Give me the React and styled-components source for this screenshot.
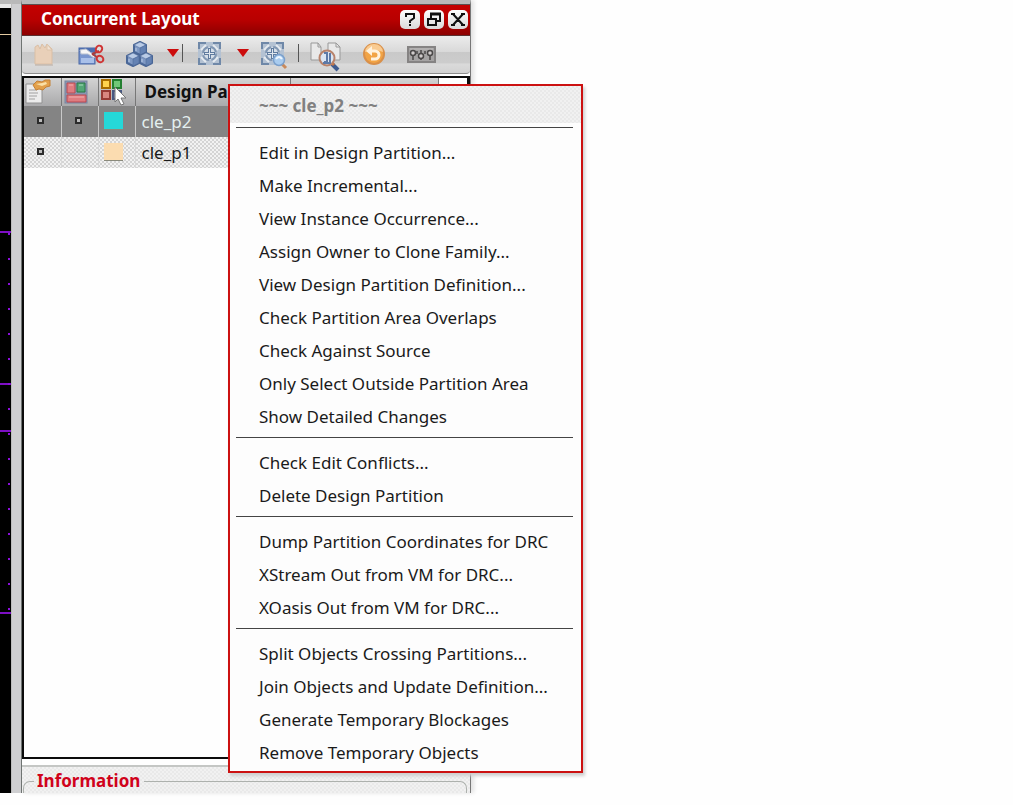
import React from "react";
import styled, { createGlobalStyle, css } from "styled-components";

const GlobalStyle = createGlobalStyle`
  *, *::before, *::after { box-sizing: border-box; }
  body {
    margin: 0;
    background: #fefefe;
    color: #1a1a1a;
    font-family: "Noto Sans", "Open Sans", sans-serif;
    font-size: 17px;
    line-height: 24px;
  }
  button { font: inherit; color: inherit; border: 0; padding: 0; background: none; cursor: pointer; }
`;

const dither = css`
  background-color: #f1f1f1;
  background-image: conic-gradient(#e9e9e9 25%, transparent 0 50%, #e9e9e9 0 75%, transparent 0);
  background-size: 4px 4px;
`;

const Workspace = styled.main`
  position: relative;
  display: grid;
  grid-template-columns: 11px 10px minmax(300px, 450fr) 542fr;
  min-height: 100vh;
  padding-bottom: 12px;
`;

const CanvasEdge = styled.div`
  border-top: 4px solid #b9b9b9;
  background: #e8e8e8;
  padding-top: 4px;
  overflow: hidden;
`;

const CanvasDrawing = styled.svg`
  display: block;
  width: 100%;
  height: 100%;
  background: #000;
`;

const Gutter = styled.div`
  background: #cfcfd1;
  border-top: 4px solid #b9b9b9;
  border-left: 1px solid #bdbdbd;
`;

const Panel = styled.section`
  display: flex;
  flex-direction: column;
  border-top: 4px solid #b9b9b9;
  border-right: 1px solid #777;
  border-left: 1px solid #6f7472;
  box-shadow: 3px 0 4px #e2e2e2;
`;

const TitleBar = styled.header`
  display: flex;
  align-items: center;
  justify-content: space-between;
  height: 32px;
  padding: 0 2px 2px 19px;
  border-top: 1px solid #5a5050;
  border-bottom: 1px solid #5b3030;
  background: linear-gradient(#c40000, #b80000 50%, #8c0000);
`;

const PanelTitle = styled.h1`
  margin: 0;
  color: #fff;
  font-size: 17px;
  line-height: 24px;
  font-weight: 700;
`;

const WindowButtons = styled.div`
  display: flex;
  gap: 4px;
`;

const WindowButton = styled.button`
  display: flex;
  width: 20px;
  height: 19px;
  border-radius: 5px;
  background: linear-gradient(#fff, #d9d9d9);
`;

const Toolbar = styled.div`
  display: flex;
  align-items: center;
  height: 38px;
  padding: 0 7px 4px;
  border-bottom: 1px solid #8d8d8d;
  border-radius: 0 0 4px 4px;
  background: linear-gradient(#ececec, #d9d9d9 42%, #c9c9c9 43%, #cccccc 72%, #dadada 76%, #d2d2d2);
`;

const ToolGroup = styled.div`
  display: flex;
  gap: 20px;
  margin-left: ${(p) => p.$before || 0}px;
`;

const ToolButton = styled.button`
  display: flex;
  width: 28px;
  height: 30px;
  svg { overflow: visible; }
`;

const CaretButton = styled.button`
  display: flex;
  width: 14px;
  height: 8px;
  margin-left: 13px;
`;

const ToolDivider = styled.span`
  width: 1px;
  height: 18px;
  margin-left: ${(p) => p.$before}px;
  background: #555;
`;

const ListBox = styled.div`
  flex: 1;
  margin-top: 2px;
  border: 2px solid #0c0c0c;
  border-right-width: 3px;
  background: #fefefe;
`;

const PartitionTable = styled.table`
  width: 100%;
  border-collapse: collapse;
  table-layout: fixed;
`;

const HeadCell = styled.th`
  width: ${(p) => p.$width || "auto"};
  height: 28px;
  padding: 0 0 0 ${(p) => (p.$text ? 9 : 0)}px;
  border-right: 1px solid #777;
  background: linear-gradient(#d3d3d3, #a9a9ab);
  color: #111;
  font-size: 17px;
  line-height: 26px;
  font-weight: 700;
  text-align: left;
  svg { display: block; }
`;

const HeadSpace = styled.th`
  width: 29px;
  padding: 0;
`;

const Row = styled.tr`
  ${(p) => (p.$selected ? css`background: #848484; color: #e4f0f0;` : css`
    background-color: #f2f2f2;
    background-image: conic-gradient(#d4d4d4 25%, transparent 0 50%, #d4d4d4 0 75%, transparent 0);
    background-size: 4px 4px;
  `)}
`;

const Cell = styled.td`
  height: 31px;
  padding: 0 0 0 ${(p) => (p.$text ? 6 : 0)}px;
  border-right: ${(p) => (p.$text ? 0 : 1)}px solid ${(p) => (p.$selected ? "#c9c9c9" : "#d9d9d9")};
  line-height: 28px;
`;

const Marker = styled.span`
  display: block;
  width: 7px;
  height: 7px;
  margin: 0 auto 2px 13px;
  border: 2px solid #2b2b2b;
  background: #bbb;
`;

const Swatch = styled.span`
  display: block;
  width: 19px;
  height: 18px;
  margin: 0 0 2px 5px;
  border-bottom: 1px solid #8a8a7c;
  background: ${(p) => p.$color};
`;

const InfoArea = styled.div`
  margin-top: 6px;
  padding: 2px 3px 0 1px;
  border-top: 2px solid #c4c6c4;
  ${dither}
`;

const InfoGroup = styled.fieldset`
  min-width: 0;
  height: 24px;
  margin: 0;
  padding: 0 10px;
  border: 1px solid #adb1ad;
  border-bottom: 0;
  border-radius: 7px 7px 0 0;
`;

const InfoLegend = styled.legend`
  padding: 0 4px 0 3px;
  color: #d0021b;
  font-size: 17px;
  line-height: 24px;
  font-weight: 700;
`;

const ContextMenu = styled.div`
  position: absolute;
  top: 84px;
  left: 228px;
  display: flex;
  flex-direction: column;
  width: max-content;
  padding-bottom: 2px;
  border: 2px solid #cc1111;
  background: #fdfdfd;
  box-shadow: 2px 3px 3px #cfcfcf;
`;

const MenuTitle = styled.div`
  height: 37px;
  padding: 0 33px 0 29px;
  ${dither}
  color: #808080;
  font-size: 17px;
  line-height: 40px;
  font-weight: 700;
`;

const MenuItem = styled.button`
  height: 33px;
  padding: 0 33px 0 29px;
  text-align: left;
  white-space: nowrap;
  line-height: 33px;
  &:hover { background: #efefef; }
`;

const MenuRule = styled.hr`
  width: auto;
  height: 1px;
  margin: 4px 8px 8px 6px;
  border: 0;
  background: #444;
`;

const LINES = [231, 383, 430, 612];
const DOTS = Array.from({ length: 16 }, (_, i) => 233 + i * 25);

function CanvasSlice() {
  return (
    <CanvasDrawing aria-hidden="true">
      <rect y="26" width="11" height="1" fill="#e2c9a0" />
      {LINES.map((y) => <rect key={y} y={y - 8} width="11" height="2" fill="#7d0fc4" />)}
      {DOTS.map((y) => <rect key={y} x="8" y={y - 8} width="2" height="2" fill="#8d10dd" />)}
    </CanvasDrawing>
  );
}

const Icon = ({ children, w = 28, h = 30 }) => (
  <svg width={w} height={h} viewBox={`0 0 ${w} ${h}`} fill="none" aria-hidden="true">{children}</svg>
);

const NewPage = () => (
  <Icon>
    <path d="M6 9l3-2 2 4 2-5 3 4 2-4 5 5v15H6z" fill="#e9d0b9" stroke="#dabfa5" />
    <path d="M18 6v6h5z" stroke="#dcc3aa" fill="#f1e2d3" />
    <path d="M6 27h18" stroke="#b9aca2" />
  </Icon>
);

const Cut = () => (
  <Icon>
    <rect x="2" y="10" width="16" height="16" fill="#7996cf" stroke="#4967a5" />
    <path d="M2 10h16v4H2z" fill="#4d6eb0" />
    <path d="M3 12l6-1 9 7-1 2-6-4-7 0z" fill="#f6f6f6" stroke="#b7bfce" />
    <path d="M4 20h13v5H4z" fill="#a9c0e9" />
    <path d="M15 16l7-3M15 16l5 3" stroke="#a73e3e" strokeWidth="2" />
    <ellipse cx="22" cy="11" rx="3" ry="3.5" transform="rotate(35 22 11)" stroke="#cf3434" strokeWidth="2" />
    <ellipse cx="23" cy="21" rx="3.5" ry="3" transform="rotate(35 23 21)" stroke="#cf3434" strokeWidth="2" />
  </Icon>
);

const Cube = ({ x, y }) => (
  <g transform={`translate(${x} ${y})`} stroke="#4a6797" strokeLinejoin="round">
    <path d="M0 3l6-3 6 3v7l-6 3-6-3z" fill="#7f99c4" strokeWidth="2" />
    <path d="M0 3l6-3 6 3-6 3z" fill="#b9cbe6" strokeWidth="0.5" />
    <path d="M6 6v7l6-3V3z" fill="#6482b3" strokeWidth="0.5" />
    <path d="M2 6v3" stroke="#b9cbe6" />
  </g>
);

const Cubes = () => (
  <Icon>
    <Cube x={9} y={4} />
    <Cube x={2} y={15} />
    <Cube x={15} y={15} />
  </Icon>
);

const Caret = () => (
  <Icon w={14} h={8}><path d="M1 0h12L7 8z" fill="#cc0c0c" /></Icon>
);

const FitShape = () => (
  <>
    <rect x="3" y="4" width="23" height="23" fill="#b4c2d3" />
    <path d="M4 11V5h7M18 5h7v6M25 20v6h-7M11 26H4v-6" stroke="#6f88a8" strokeWidth="2" />
    <path d="M11 7l-5 5M18 7l5 5M6 19l5 5M23 19l-5 5" stroke="#e6ebf0" strokeWidth="2" />
    <circle cx="14.5" cy="15.5" r="6.5" fill="#d5dee8" stroke="#8197b3" strokeWidth="2" strokeDasharray="8 2.2" />
    <path d="M14.500 10v11M9 15.500h11" stroke="#5f7b9f" strokeWidth="3" />
    <path d="M14.500 11v9M10 15.500h9" stroke="#dfe6ee" />
  </>
);

const Fit = () => <Icon><FitShape /></Icon>;

const FitZoom = () => (
  <Icon>
    <FitShape />
    <path d="M23 25l5 5" stroke="#c98a5b" strokeWidth="3" />
    <circle cx="21" cy="22" r="5.500" fill="#a9ccef" stroke="#7ba0cc" strokeWidth="1.5" />
    <path d="M18 21q3-4 6 0" stroke="#edf6ff" strokeWidth="2" />
  </Icon>
);

const Compare = () => (
  <Icon>
    <path d="M0 5h7l3 4v13H0z" fill="#e9e9e9" stroke="#999" />
    <path d="M17 5h8l4 4v13H17z" fill="#e9e9e9" stroke="#999" />
    <path d="M7 5v4h3M25 5v4h4" stroke="#999" />
    <path d="M21 26l6 6" stroke="#3e5b90" strokeWidth="4" />
    <path d="M20 24l3 3" stroke="#c9733e" strokeWidth="3" />
    <circle cx="16" cy="20" r="7.500" fill="#dbe5f2" stroke="#b8826a" strokeWidth="2" />
    <path d="M13 15h3v9h-3M19 15v9M12 25h8" stroke="#5d7aa8" strokeWidth="2" />
  </Icon>
);

const Undo = () => (
  <Icon>
    <circle cx="15" cy="16" r="10" fill="#f2a445" stroke="#d9904a" strokeWidth="2" />
    <path d="M6 14a9 8 0 0 1 18 0q-9-4-18 0z" fill="#f9cb91" />
    <path d="M10 13h6a4 4 0 1 1 0 8h-4" stroke="#fff2dd" strokeWidth="3" />
    <path d="M13 8l-6 5 6 5z" fill="#fff2dd" />
  </Icon>
);

const Sliders = () => (
  <Icon>
    <rect x="1" y="9" width="27" height="15" fill="#a5a3a3" stroke="#858383" strokeWidth="2" />
    <path d="M3 11h23" stroke="#c1bfbf" />
    <path d="M6 12v10M14 12v10M23 12v10M10 13v3M18 13v3" stroke="#4a4848" strokeWidth="1.500" />
    <g fill="#d0cccc" stroke="#4a4848" strokeWidth="1.500">
      <circle cx="6" cy="15" r="2.500" /><circle cx="14" cy="18" r="2.500" />
      <circle cx="23" cy="15" r="2.500" />
    </g>
  </Icon>
);

const Help = () => (
  <Icon w={20} h={19}>
    <path d="M6 7V4h8v4l-4 3v2" stroke="#111" strokeWidth="2" />
    <path d="M9 14h2v2H9z" fill="#111" />
  </Icon>
);

const Restore = () => (
  <Icon w={20} h={19}>
    <path d="M7 8V4h9v7h-4" stroke="#111" strokeWidth="2" />
    <path d="M4 9h8v6H4z" stroke="#111" strokeWidth="2" />
    <path d="M6 4h11" stroke="#111" strokeWidth="3" />
  </Icon>
);

const Close = () => (
  <Icon w={20} h={19}><path d="M5 4l10 11M15 4L5 15M3 4h4M13 4h4M3 15h4M13 15h4" stroke="#111" strokeWidth="2" /></Icon>
);

const EditHead = () => (
  <Icon w={36} h={27}>
    <path d="M2 5h13l3 3v16H2z" fill="#ececec" stroke="#929292" />
    <path d="M5 11h8M5 14h9M5 17h8M5 20h6" stroke="#a0a0a0" />
    <path d="M9 6l4-4 5 1 3-2h5v6l-4 1-3 3-4-1-3 1z" fill="#e2a04b" stroke="#c48137" />
    <path d="M12 5l6-1 4-1 1 2-5 2z" fill="#fae0a7" />
  </Icon>
);

const LayoutHead = () => (
  <Icon w={36} h={27}>
    <rect x="3" y="2" width="22" height="22" fill="#8895b1" stroke="#7885a0" />
    <path d="M5 4h8v10H5zM5 16h19v7H5z" fill="#df7c80" stroke="#b94850" />
    <path d="M15 4h8v9h-8z" fill="#53a776" stroke="#287745" />
    <path d="M7 6h4M7 18h15" stroke="#f2b0af" />
    <path d="M17 6h4" stroke="#a7dcb9" />
  </Icon>
);

const SelectHead = () => (
  <Icon w={36} h={27}>
    <rect x="3" y="1" width="8" height="8" fill="#ffd34f" stroke="#a86c00" strokeWidth="2" />
    <rect x="14" y="1" width="8" height="8" fill="#71c778" stroke="#237f31" strokeWidth="2" />
    <rect x="3" y="12" width="8" height="8" fill="#d98780" stroke="#973b35" strokeWidth="2" />
    <rect x="14" y="12" width="8" height="8" fill="#7788b2" stroke="#485881" strokeWidth="2" />
    <path d="M16 8v15l3-3 3 6 3-1-3-6h5z" fill="#fff" stroke="#777" />
  </Icon>
);

const MENU = [
  [
    "Edit in Design Partition...",
    "Make Incremental...",
    "View Instance Occurrence...",
    "Assign Owner to Clone Family...",
    "View Design Partition Definition...",
    "Check Partition Area Overlaps",
    "Check Against Source",
    "Only Select Outside Partition Area",
    "Show Detailed Changes",
  ],
  ["Check Edit Conflicts...", "Delete Design Partition"],
  ["Dump Partition Coordinates for DRC", "XStream Out from VM for DRC...", "XOasis Out from VM for DRC..."],
  [
    "Split Objects Crossing Partitions...",
    "Join Objects and Update Definition...",
    "Generate Temporary Blockages",
    "Remove Temporary Objects",
  ],
];

const PARTITIONS = [
  { name: "cle_p2", color: "#25d8d8", selected: true, edit: true, layout: true },
  { name: "cle_p1", color: "#fbdcb0", selected: false, edit: true, layout: false },
];

export default function App() {
  return (
    <>
      <GlobalStyle />
      <Workspace>
        <CanvasEdge><CanvasSlice /></CanvasEdge>
        <Gutter />
        <Panel>
          <TitleBar>
            <PanelTitle>Concurrent Layout</PanelTitle>
            <WindowButtons>
              <WindowButton aria-label="Help"><Help /></WindowButton>
              <WindowButton aria-label="Restore"><Restore /></WindowButton>
              <WindowButton aria-label="Close"><Close /></WindowButton>
            </WindowButtons>
          </TitleBar>
          <Toolbar role="toolbar" aria-label="Layout tools">
            <ToolGroup>
              <ToolButton aria-label="New partition"><NewPage /></ToolButton>
              <ToolButton aria-label="Cut"><Cut /></ToolButton>
              <ToolButton aria-label="Hierarchy"><Cubes /></ToolButton>
            </ToolGroup>
            <CaretButton aria-label="Hierarchy options"><Caret /></CaretButton>
            <ToolDivider $before={2} />
            <ToolGroup $before={12}>
              <ToolButton aria-label="Fit"><Fit /></ToolButton>
            </ToolGroup>
            <CaretButton aria-label="Fit options"><Caret /></CaretButton>
            <ToolGroup $before={8}>
              <ToolButton aria-label="Zoom to fit"><FitZoom /></ToolButton>
            </ToolGroup>
            <ToolDivider $before={12} />
            <ToolGroup $before={12}>
              <ToolButton aria-label="Compare"><Compare /></ToolButton>
              <ToolButton aria-label="Undo"><Undo /></ToolButton>
              <ToolButton aria-label="Settings"><Sliders /></ToolButton>
            </ToolGroup>
          </Toolbar>
          <ListBox>
            <PartitionTable>
              <thead>
                <tr>
                  <HeadCell $width="37px" aria-label="Edit"><EditHead /></HeadCell>
                  <HeadCell $width="37px" aria-label="Layout"><LayoutHead /></HeadCell>
                  <HeadCell $width="37px" aria-label="Select"><SelectHead /></HeadCell>
                  <HeadCell $text>Design Pa</HeadCell>
                  <HeadCell $width="148px" />
                  <HeadSpace />
                </tr>
              </thead>
              <tbody>
                {PARTITIONS.map((p) => (
                  <Row key={p.name} $selected={p.selected}>
                    <Cell $selected={p.selected}>{p.edit && <Marker />}</Cell>
                    <Cell $selected={p.selected}>{p.layout && <Marker />}</Cell>
                    <Cell $selected={p.selected}><Swatch $color={p.color} /></Cell>
                    <Cell $text $selected={p.selected} colSpan={3}>{p.name}</Cell>
                  </Row>
                ))}
              </tbody>
            </PartitionTable>
          </ListBox>
          <InfoArea>
            <InfoGroup>
              <InfoLegend>Information</InfoLegend>
            </InfoGroup>
          </InfoArea>
        </Panel>
        <ContextMenu role="menu">
          <MenuTitle>~~~ cle_p2 ~~~</MenuTitle>
          {MENU.map((group) => (
            <React.Fragment key={group[0]}>
              <MenuRule />
              {group.map((label) => <MenuItem key={label} role="menuitem">{label}</MenuItem>)}
            </React.Fragment>
          ))}
        </ContextMenu>
      </Workspace>
    </>
  );
}
